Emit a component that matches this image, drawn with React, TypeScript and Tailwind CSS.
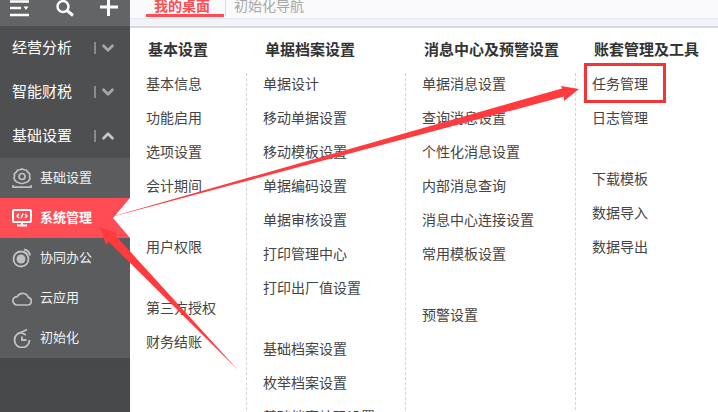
import { ChevronDown, ChevronUp } from 'lucide-react';
import type { ReactNode } from 'react';

const FONT = 'font-["Noto_Sans_CJK_SC","Liberation_Sans",sans-serif]';

const GROUPS = [
  { label: '经营分析', open: false },
  { label: '智能财税', open: false },
  { label: '基础设置', open: true },
];

const GearIcon = () => (
  <svg width="22" height="22" viewBox="0 0 22 22" fill="none" stroke="#c0c2c2" strokeWidth="1.700">
    <path d="M11 2l2.200 .8 2.300 .4 1.300 1.900 1.900 1.700-.2 2.400 .5 2.200-1 2-1.700 1.600-2.300 .7-2 .8h-2l-2-.8-2.300-.7-1.700-1.600-1-2 .5-2.200-.2-2.400 1.900-1.700 1.300-1.900 2.300-.4z" />
    <circle cx="11" cy="9.500" r="3" />
    <path d="M2 18v2.200h18V18" />
  </svg>
);

const ScreenIcon = () => (
  <svg width="20" height="18" viewBox="0 0 20 18" fill="none" stroke="#fff">
    <rect x="1" y="1" width="18" height="12" rx="1" strokeWidth="2" />
    <path d="M7 5L5 7l2 2M13 5l2 2-2 2M11 4.500L9 9.500" strokeWidth="1.400" />
    <path d="M10 13v3M5 16.500h10" strokeWidth="1.800" />
  </svg>
);

const TeamIcon = () => (
  <svg width="20" height="20" viewBox="0 0 20 20" fill="none" stroke="#c0c2c2" strokeWidth="1.800">
    <circle cx="9" cy="11" r="7.500" />
    <circle cx="9" cy="11" r="4.500" fill="#c0c2c2" stroke="none" />
    <path d="M12 1.500a7 7 0 0 1 6 6" />
    <path d="M12 4.200a4.500 4.500 0 0 1 3.500 3.300" />
  </svg>
);

const CloudIcon = () => (
  <svg width="20" height="16" viewBox="0 0 20 16" fill="none" stroke="#c0c2c2" strokeWidth="1.700">
    <path d="M5 15h10.500a3.900 3.900 0 0 0 .8-7.700A6 6 0 0 0 5.300 6.600 4.200 4.200 0 0 0 5 15z" />
  </svg>
);

const RefreshIcon = () => (
  <svg width="18" height="20" viewBox="0 0 18 20" fill="none" stroke="#c0c2c2" strokeWidth="1.900">
    <path d="M9 4.500A7.500 7.500 0 1 0 16.500 12" />
    <path d="M8 4.500l6-3M8 4.500l5 2.500" />
    <path d="M9 8.500V12h4.500" />
  </svg>
);

const MENU: { label: string; icon: ReactNode; active?: boolean }[] = [
  { label: '基础设置', icon: <GearIcon /> },
  { label: '系统管理', icon: <ScreenIcon />, active: true },
  { label: '协同办公', icon: <TeamIcon /> },
  { label: '云应用', icon: <CloudIcon /> },
  { label: '初始化', icon: <RefreshIcon /> },
];

// a null entry is the wider gap between two groups of links
const COLUMNS: { title: string; width: string; items: (string | null)[] }[] = [
  {
    title: '基本设置',
    width: 'w-[116px]',
    items: ['基本信息', '功能启用', '选项设置', '会计期间', null, '用户权限', null, '第三方授权', '财务结账'],
  },
  {
    title: '单据档案设置',
    width: 'w-[159px]',
    items: ['单据设计', '移动单据设置', '移动模板设置', '单据编码设置', '单据审核设置', '打印管理中心', '打印出厂值设置', null, '基础档案设置', '枚举档案设置', '基础档案编码设置'],
  },
  {
    title: '消息中心及预警设置',
    width: 'w-[170px]',
    items: ['单据消息设置', '查询消息设置', '个性化消息设置', '内部消息查询', '消息中心连接设置', '常用模板设置', null, '预警设置'],
  },
  {
    title: '账套管理及工具',
    width: 'flex-1',
    items: ['任务管理', '日志管理', null, '下载模板', '数据导入', '数据导出'],
  },
];

function Sidebar() {
  return (
    <aside className="flex w-[130px] shrink-0 flex-col bg-gradient-to-b from-[#424345] to-[#48494b]">
      <div className="flex h-[26px] items-start bg-[#626465] text-white">
        <svg width="130" height="26" viewBox="0 0 130 26" fill="none" stroke="#fff" strokeWidth="2.400">
          <path d="M10 1.500h19M10 8h11M10 15h19" />
          <path d="M23.500 6.500h5l-2.500 3.500z" fill="#fff" stroke="none" />
          <circle cx="63" cy="6.500" r="5.500" />
          <path d="M67 10.500l6 5" strokeWidth="3" />
          <path d="M108.500 -1v17M100 7h18" strokeWidth="3" />
        </svg>
      </div>
      <div className="bg-[#4d4f50]">
        {GROUPS.map((g) => (
          <div key={g.label} className="flex h-[44px] items-center pl-[12px] text-[15px] text-white">
            <span className="w-[82px] pb-[1px]">{g.label}</span>
            <span className="h-[12px] w-[2px] bg-[#8a8c8c]" />
            {g.open ? (
              <ChevronUp className="ml-[3px] text-[#c8c8c8]" size={18} strokeWidth={3.500} />
            ) : (
              <ChevronDown className="ml-[3px] text-[#a8a8a8]" size={18} strokeWidth={3.500} />
            )}
          </div>
        ))}
      </div>
      <div className="bg-[#5a5c5d]">
        {MENU.map((m) =>
          m.active ? (
            <div key={m.label} className="relative flex h-[40px] items-center bg-[#ff4d55] text-[13px] font-bold text-white">
              <span className="flex w-[40px] justify-center pl-[4px]">{m.icon}</span>
              <span className="pb-[2px]">{m.label}</span>
              <span className="absolute right-0 top-0 h-0 w-0 border-y-[20px] border-r-[17px] border-y-transparent border-r-white" />
            </div>
          ) : (
            <div key={m.label} className="flex h-[40px] items-center text-[13px] text-[#f2f2f2]">
              <span className="flex w-[40px] justify-center pl-[4px]">{m.icon}</span>
              <span className="pb-[2px]">{m.label}</span>
            </div>
          ),
        )}
      </div>
    </aside>
  );
}

function LinkColumn({ title, width, items, first }: { title: string; width: string; items: (string | null)[]; first: boolean }) {
  return (
    <div className={`flex flex-col ${width}`}>
      <div className={first ? 'flex h-[43px] items-center pl-[18px] text-[15px] font-bold text-[#333]' : 'flex h-[43px] items-center pl-[19px] text-[15px] font-bold text-[#333]'}>{title}</div>
      <div className="mt-[2px] flex-1">
        <div className={first ? 'h-full pl-[16px]' : 'h-full border-l border-dashed border-[#d4d4d4] pl-[16px]'}>
          {items.map((item, i) =>
            item === null ? (
              <div key={i} className="h-[27px]" />
            ) : (
              <div key={item} className="mb-[14px] whitespace-nowrap text-[14px] leading-[20px] text-[#444]">
                {item}
              </div>
            ),
          )}
        </div>
      </div>
    </div>
  );
}

export default function App() {
  return (
    <div className={`relative flex h-[412px] w-[718px] overflow-hidden bg-white ${FONT}`}>
      <Sidebar />
      <main className="flex flex-1 flex-col">
        <div className="flex h-[18px] shrink-0 items-start bg-[#fafafc] pl-[16px] text-[14px] leading-[10px]">
          <div className="h-[17px] w-[78px] border-b-[3px] border-[#ff4d55] pl-[8px] font-bold text-[#ff4d55]">我的桌面</div>
          <span className="ml-[1px] h-[16px] w-px bg-[#dcdcdc]" />
          <div className="pl-[8px] text-[#a8a8a8]">初始化导航</div>
        </div>
        <div className="h-[10px] shrink-0 border-t border-[#e6e8f0] border-b-[2px] border-b-[#d8d9dd] bg-[#f1f3f8]" />
        <div className="flex flex-1">
          {COLUMNS.map((c, i) => (
            <LinkColumn key={c.title} title={c.title} width={c.width} items={c.items} first={i === 0} />
          ))}
        </div>
      </main>

      {/* annotations drawn over the screenshot */}
      <div className="absolute left-[584px] top-[63px] h-[40px] w-[82px] border-[3px] border-[#f5343a]" />
      <svg className="pointer-events-none absolute left-0 top-0" width="718" height="412" viewBox="0 0 718 412">
        <polygon points="100,220 562,88.500 561,86 579,89 564,101 564,96.500" fill="#ff3b40" />
        <polygon points="100,227 117,233 116,236 238,370 109,242 106,245" fill="#ff3b40" />
      </svg>
    </div>
  );
}
